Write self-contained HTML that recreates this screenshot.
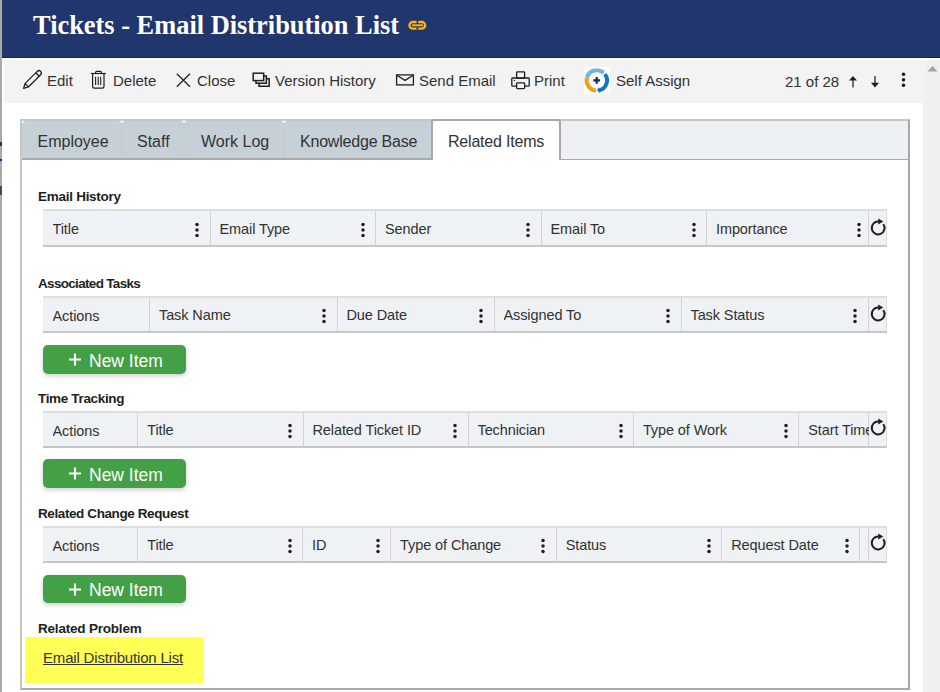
<!DOCTYPE html>
<html><head><meta charset="utf-8">
<style>
*{box-sizing:border-box;margin:0;padding:0}
html,body{width:940px;height:692px;overflow:hidden;background:#fff;font-family:"Liberation Sans",sans-serif;color:#323130}
.a{position:absolute}
#strip{left:0;top:0;width:2px;height:692px;background:#a9a9a9}
#hdr{left:2px;top:0;width:938px;height:58px;background:#21366c;border-bottom:1px solid #0b2463}
#title{left:33px;top:6.8px;font-family:"Liberation Serif",serif;font-weight:bold;font-size:26.4px;color:#fff;white-space:nowrap;line-height:36px}
#tb{left:4px;top:60px;width:922px;height:42.5px;background:#f3f3f3}
#sb{left:923px;top:102px;width:17px;height:590px;background:#f0f0f0}
#sb2{left:926px;top:60px;width:14px;height:42px;background:#f0f0f0}
.tt{font-size:15px;color:#323130;white-space:nowrap;line-height:18px}
#box{left:20px;top:119px;width:890px;height:571px;border:2px solid #c6c6c6;border-right-color:#a8a8a8;border-bottom-color:#a8a8a8}
#tabs{left:22px;top:121px;width:886px;height:39px;background:#eef1f4;border-bottom:1px solid #a9a9a9}
.tab{top:121px;height:38px;background:#c5d0d7;border-top:1px solid #c9cdd0;border-bottom:1px solid #a9a9a9}
.tsep{top:121px;height:37px;width:2px;background:#cacaca}
.tabt{font-size:16px;color:#333;white-space:nowrap;line-height:20px}
#act{left:431px;top:119px;width:130px;height:41px;background:#fff;border:2px solid #a8a8a8;border-bottom:none;border-radius:3px 3px 0 0}
.h{font-weight:bold;font-size:13.5px;letter-spacing:-0.2px;color:#201f1e;white-space:nowrap;line-height:16px;left:38px}
.grid{left:43px;width:844px;height:38px;background:#eef2f5;border-top:2px solid #dedede;border-right:1px solid #dcdcdc;border-bottom:2px solid #c6c6c6}
.sep{width:1px;background:#d2d2d2}
.gt{font-size:14.5px;letter-spacing:-0.1px;color:#323130;white-space:nowrap;line-height:18px}
.btn{left:43px;width:143px;height:28.5px;background:#43a047;border-radius:5px;box-shadow:0 2px 5px rgba(0,0,0,.2)}
.bt{color:#fff;font-size:17.5px;white-space:nowrap;line-height:20px}
</style></head><body>
<div id="strip" class="a"></div>
<div class="a" style="left:0;top:142px;width:2px;height:4px;background:#2a3a4a"></div>
<div class="a" style="left:0;top:159px;width:2px;height:2px;background:#1a2aa0"></div>
<div class="a" style="left:0;top:186px;width:2px;height:9px;background:#4a4a40"></div>
<div id="hdr" class="a"></div>
<div id="title" class="a">Tickets - Email Distribution List</div>
<svg class="a" style="left:406px;top:18px" width="24" height="14" viewBox="0 0 24 14">
<path d="M10.6 4 H6.7 A3.3 3.3 0 0 0 6.7 10.6 H10.6" fill="none" stroke="#f5b21a" stroke-width="2.3"/>
<path d="M12.2 4 H15.9 A3.3 3.3 0 0 1 15.9 10.6 H12.2" fill="none" stroke="#f5b21a" stroke-width="2.3"/>
<path d="M6 7.3 H17" stroke="#f5b21a" stroke-width="2"/>
</svg>
<div id="tb" class="a"></div>
<div id="sb" class="a"></div><div id="sb2" class="a"></div>
<svg class="a" style="left:927px;top:65px" width="11" height="7"><path d="M0.5 6.5 L5.5 1 L10.5 6.5Z" fill="#a3a3a3"/></svg>
<div id="box" class="a"></div>
<div id="tabs" class="a"></div>
<div class="a tab" style="left:22px;width:100px"></div>
<svg class="a" style="left:21px;top:120px" width="5" height="5"><path d="M0.8 0.8 H4.2 L0.8 4.2Z" fill="#eef2f4"/></svg>
<div class="a tabt" style="left:37.5px;top:132px;letter-spacing:0">Employee</div>
<div class="a tab" style="left:122px;width:62px"></div>
<div class="a tsep" style="left:121px"></div>
<svg class="a" style="left:119px;top:120px" width="6" height="4"><path d="M0.5 0.8 H5.5 L3 3.6Z" fill="#f4f6f7"/></svg>
<div class="a tabt" style="left:137px;top:132px;letter-spacing:0">Staff</div>
<div class="a tab" style="left:184px;width:100px"></div>
<div class="a tsep" style="left:183px"></div>
<svg class="a" style="left:181px;top:120px" width="6" height="4"><path d="M0.5 0.8 H5.5 L3 3.6Z" fill="#f4f6f7"/></svg>
<div class="a tabt" style="left:201px;top:132px;letter-spacing:0">Work Log</div>
<div class="a tab" style="left:284px;width:148px"></div>
<div class="a tsep" style="left:283px"></div>
<svg class="a" style="left:281px;top:120px" width="6" height="4"><path d="M0.5 0.8 H5.5 L3 3.6Z" fill="#f4f6f7"/></svg>
<div class="a tabt" style="left:300px;top:132px;letter-spacing:-0.2px">Knowledge Base</div>
<div id="act" class="a"></div>
<div class="a tabt" style="left:448px;top:132px;letter-spacing:-0.2px">Related Items</div>
<div class="a h" style="top:189.2px;letter-spacing:-0.27px">Email History</div>
<div class="a grid" style="top:209px;height:38px"></div>
<div class="a sep" style="left:209.5px;top:211px;height:34px"></div>
<div class="a sep" style="left:375.0px;top:211px;height:34px"></div>
<div class="a sep" style="left:540.5px;top:211px;height:34px"></div>
<div class="a sep" style="left:706.0px;top:211px;height:34px"></div>
<div class="a sep" style="left:867.5px;top:211px;height:34px"></div>
<div class="a gt" style="left:52.5px;top:220.0px;width:157.5px;overflow:hidden">Title</div>
<svg class="a" style="left:193.2px;top:219.9px" width="8" height="20" viewBox="0 0 8 20"><g fill="#201f1e"><circle cx="4" cy="4.4" r="1.75"/><circle cx="4" cy="10" r="1.75"/><circle cx="4" cy="15.6" r="1.75"/></g></svg>
<div class="a gt" style="left:219.5px;top:220.0px;width:156.0px;overflow:hidden">Email Type</div>
<svg class="a" style="left:358.7px;top:219.9px" width="8" height="20" viewBox="0 0 8 20"><g fill="#201f1e"><circle cx="4" cy="4.4" r="1.75"/><circle cx="4" cy="10" r="1.75"/><circle cx="4" cy="15.6" r="1.75"/></g></svg>
<div class="a gt" style="left:385.0px;top:220.0px;width:156.0px;overflow:hidden">Sender</div>
<svg class="a" style="left:524.2px;top:219.9px" width="8" height="20" viewBox="0 0 8 20"><g fill="#201f1e"><circle cx="4" cy="4.4" r="1.75"/><circle cx="4" cy="10" r="1.75"/><circle cx="4" cy="15.6" r="1.75"/></g></svg>
<div class="a gt" style="left:550.5px;top:220.0px;width:156.0px;overflow:hidden">Email To</div>
<svg class="a" style="left:689.7px;top:219.9px" width="8" height="20" viewBox="0 0 8 20"><g fill="#201f1e"><circle cx="4" cy="4.4" r="1.75"/><circle cx="4" cy="10" r="1.75"/><circle cx="4" cy="15.6" r="1.75"/></g></svg>
<div class="a gt" style="left:716.0px;top:220.0px;width:152.0px;overflow:hidden">Importance</div>
<svg class="a" style="left:854.8px;top:219.9px" width="8" height="20" viewBox="0 0 8 20"><g fill="#201f1e"><circle cx="4" cy="4.4" r="1.75"/><circle cx="4" cy="10" r="1.75"/><circle cx="4" cy="15.6" r="1.75"/></g></svg>
<svg class="a" style="left:867.7px;top:217.8px" width="20" height="20" viewBox="0 0 20 20"><path d="M10.6 3.6 A6.4 6.4 0 1 0 15.3 6.2" fill="none" stroke="#201f1e" stroke-width="2"/><path d="M10.2 0.6 L15.3 3.5 L10.2 6.4Z" fill="#201f1e"/></svg>
<div class="a h" style="top:275.9px;letter-spacing:-0.68px">Associated Tasks</div>
<div class="a grid" style="top:296px;height:37px"></div>
<div class="a sep" style="left:149.0px;top:298px;height:33px"></div>
<div class="a sep" style="left:336.5px;top:298px;height:33px"></div>
<div class="a sep" style="left:493.5px;top:298px;height:33px"></div>
<div class="a sep" style="left:680.5px;top:298px;height:33px"></div>
<div class="a sep" style="left:867.5px;top:298px;height:33px"></div>
<div class="a gt" style="left:52.5px;top:307.2px;width:97.0px;overflow:hidden">Actions</div>
<div class="a gt" style="left:159.0px;top:305.9px;width:178.0px;overflow:hidden">Task Name</div>
<svg class="a" style="left:320.2px;top:305.7px" width="8" height="20" viewBox="0 0 8 20"><g fill="#201f1e"><circle cx="4" cy="4.4" r="1.75"/><circle cx="4" cy="10" r="1.75"/><circle cx="4" cy="15.6" r="1.75"/></g></svg>
<div class="a gt" style="left:346.5px;top:305.9px;width:147.5px;overflow:hidden">Due Date</div>
<svg class="a" style="left:477.2px;top:305.7px" width="8" height="20" viewBox="0 0 8 20"><g fill="#201f1e"><circle cx="4" cy="4.4" r="1.75"/><circle cx="4" cy="10" r="1.75"/><circle cx="4" cy="15.6" r="1.75"/></g></svg>
<div class="a gt" style="left:503.5px;top:305.9px;width:177.5px;overflow:hidden">Assigned To</div>
<svg class="a" style="left:664.2px;top:305.7px" width="8" height="20" viewBox="0 0 8 20"><g fill="#201f1e"><circle cx="4" cy="4.4" r="1.75"/><circle cx="4" cy="10" r="1.75"/><circle cx="4" cy="15.6" r="1.75"/></g></svg>
<div class="a gt" style="left:690.5px;top:305.9px;width:177.5px;overflow:hidden">Task Status</div>
<svg class="a" style="left:851.2px;top:305.7px" width="8" height="20" viewBox="0 0 8 20"><g fill="#201f1e"><circle cx="4" cy="4.4" r="1.75"/><circle cx="4" cy="10" r="1.75"/><circle cx="4" cy="15.6" r="1.75"/></g></svg>
<svg class="a" style="left:867.7px;top:303.5px" width="20" height="20" viewBox="0 0 20 20"><path d="M10.6 3.6 A6.4 6.4 0 1 0 15.3 6.2" fill="none" stroke="#201f1e" stroke-width="2"/><path d="M10.2 0.6 L15.3 3.5 L10.2 6.4Z" fill="#201f1e"/></svg>
<div class="a btn" style="top:345px"></div>
<svg class="a" style="left:68px;top:353px" width="14" height="13" viewBox="0 0 14 13"><path d="M1 6.5 H13 M7 0.6 V12.4" stroke="#fff" stroke-width="2.1"/></svg>
<div class="a bt" style="left:89px;top:350.6px">New Item</div>
<div class="a h" style="top:390.5px;letter-spacing:-0.34px">Time Tracking</div>
<div class="a grid" style="top:411px;height:37px"></div>
<div class="a sep" style="left:137.2px;top:413px;height:33px"></div>
<div class="a sep" style="left:302.5px;top:413px;height:33px"></div>
<div class="a sep" style="left:467.5px;top:413px;height:33px"></div>
<div class="a sep" style="left:632.9px;top:413px;height:33px"></div>
<div class="a sep" style="left:798.2px;top:413px;height:33px"></div>
<div class="a sep" style="left:868.2px;top:413px;height:33px"></div>
<div class="a gt" style="left:52.5px;top:422.2px;width:85.2px;overflow:hidden">Actions</div>
<div class="a gt" style="left:147.2px;top:420.9px;width:155.8px;overflow:hidden">Title</div>
<svg class="a" style="left:286.2px;top:420.7px" width="8" height="20" viewBox="0 0 8 20"><g fill="#201f1e"><circle cx="4" cy="4.4" r="1.75"/><circle cx="4" cy="10" r="1.75"/><circle cx="4" cy="15.6" r="1.75"/></g></svg>
<div class="a gt" style="left:312.5px;top:420.9px;width:155.5px;overflow:hidden">Related Ticket ID</div>
<svg class="a" style="left:451.2px;top:420.7px" width="8" height="20" viewBox="0 0 8 20"><g fill="#201f1e"><circle cx="4" cy="4.4" r="1.75"/><circle cx="4" cy="10" r="1.75"/><circle cx="4" cy="15.6" r="1.75"/></g></svg>
<div class="a gt" style="left:477.5px;top:420.9px;width:155.9px;overflow:hidden">Technician</div>
<svg class="a" style="left:616.6px;top:420.7px" width="8" height="20" viewBox="0 0 8 20"><g fill="#201f1e"><circle cx="4" cy="4.4" r="1.75"/><circle cx="4" cy="10" r="1.75"/><circle cx="4" cy="15.6" r="1.75"/></g></svg>
<div class="a gt" style="left:642.9px;top:420.9px;width:155.8px;overflow:hidden">Type of Work</div>
<svg class="a" style="left:781.9px;top:420.7px" width="8" height="20" viewBox="0 0 8 20"><g fill="#201f1e"><circle cx="4" cy="4.4" r="1.75"/><circle cx="4" cy="10" r="1.75"/><circle cx="4" cy="15.6" r="1.75"/></g></svg>
<div class="a gt" style="left:808.2px;top:420.9px;width:60.5px;overflow:hidden">Start Time</div>
<svg class="a" style="left:867.7px;top:417.7px" width="20" height="20" viewBox="0 0 20 20"><path d="M10.6 3.6 A6.4 6.4 0 1 0 15.3 6.2" fill="none" stroke="#201f1e" stroke-width="2"/><path d="M10.2 0.6 L15.3 3.5 L10.2 6.4Z" fill="#201f1e"/></svg>
<div class="a btn" style="top:459px"></div>
<svg class="a" style="left:68px;top:467px" width="14" height="13" viewBox="0 0 14 13"><path d="M1 6.5 H13 M7 0.6 V12.4" stroke="#fff" stroke-width="2.1"/></svg>
<div class="a bt" style="left:89px;top:464.6px">New Item</div>
<div class="a h" style="top:505.5px;letter-spacing:-0.4px">Related Change Request</div>
<div class="a grid" style="top:525.5px;height:37px"></div>
<div class="a sep" style="left:137.2px;top:527.5px;height:33px"></div>
<div class="a sep" style="left:302.0px;top:527.5px;height:33px"></div>
<div class="a sep" style="left:390.1px;top:527.5px;height:33px"></div>
<div class="a sep" style="left:555.7px;top:527.5px;height:33px"></div>
<div class="a sep" style="left:721.2px;top:527.5px;height:33px"></div>
<div class="a sep" style="left:859.1px;top:527.5px;height:33px"></div>
<div class="a sep" style="left:867.6px;top:527.5px;height:33px"></div>
<div class="a gt" style="left:52.5px;top:536.8px;width:85.2px;overflow:hidden">Actions</div>
<div class="a gt" style="left:147.2px;top:535.5px;width:155.3px;overflow:hidden">Title</div>
<svg class="a" style="left:285.7px;top:535.7px" width="8" height="20" viewBox="0 0 8 20"><g fill="#201f1e"><circle cx="4" cy="4.4" r="1.75"/><circle cx="4" cy="10" r="1.75"/><circle cx="4" cy="15.6" r="1.75"/></g></svg>
<div class="a gt" style="left:312.0px;top:535.5px;width:78.6px;overflow:hidden">ID</div>
<svg class="a" style="left:373.8px;top:535.7px" width="8" height="20" viewBox="0 0 8 20"><g fill="#201f1e"><circle cx="4" cy="4.4" r="1.75"/><circle cx="4" cy="10" r="1.75"/><circle cx="4" cy="15.6" r="1.75"/></g></svg>
<div class="a gt" style="left:400.1px;top:535.5px;width:156.1px;overflow:hidden">Type of Change</div>
<svg class="a" style="left:539.4px;top:535.7px" width="8" height="20" viewBox="0 0 8 20"><g fill="#201f1e"><circle cx="4" cy="4.4" r="1.75"/><circle cx="4" cy="10" r="1.75"/><circle cx="4" cy="15.6" r="1.75"/></g></svg>
<div class="a gt" style="left:565.7px;top:535.5px;width:156.0px;overflow:hidden">Status</div>
<svg class="a" style="left:704.9px;top:535.7px" width="8" height="20" viewBox="0 0 8 20"><g fill="#201f1e"><circle cx="4" cy="4.4" r="1.75"/><circle cx="4" cy="10" r="1.75"/><circle cx="4" cy="15.6" r="1.75"/></g></svg>
<div class="a gt" style="left:731.2px;top:535.5px;width:128.4px;overflow:hidden">Request Date</div>
<svg class="a" style="left:842.8px;top:535.7px" width="8" height="20" viewBox="0 0 8 20"><g fill="#201f1e"><circle cx="4" cy="4.4" r="1.75"/><circle cx="4" cy="10" r="1.75"/><circle cx="4" cy="15.6" r="1.75"/></g></svg>
<svg class="a" style="left:867.7px;top:532.7px" width="20" height="20" viewBox="0 0 20 20"><path d="M10.6 3.6 A6.4 6.4 0 1 0 15.3 6.2" fill="none" stroke="#201f1e" stroke-width="2"/><path d="M10.2 0.6 L15.3 3.5 L10.2 6.4Z" fill="#201f1e"/></svg>
<div class="a btn" style="top:574.5px"></div>
<svg class="a" style="left:68px;top:582.5px" width="14" height="13" viewBox="0 0 14 13"><path d="M1 6.5 H13 M7 0.6 V12.4" stroke="#fff" stroke-width="2.1"/></svg>
<div class="a bt" style="left:89px;top:580.1px">New Item</div>
<div class="a h" style="top:620.5px;letter-spacing:-0.2px">Related Problem</div>
<div class="a" style="left:25px;top:637px;width:179px;height:46px;background:#ffff55"></div>
<div class="a tt" style="left:43px;top:649px;text-decoration:underline;color:#333;letter-spacing:-0.18px">Email Distribution List</div>
<!-- toolbar -->
<svg class="a" style="left:20px;top:68px" width="24" height="24" viewBox="0 0 24 24">
<g fill="none" stroke="#201f1e" stroke-width="1.3" stroke-linejoin="round">
<path d="M3.6 20.4 L5 15.6 L17.2 3.4 A2.1 2.1 0 0 1 20.6 6.8 L8.4 19 Z"/>
<path d="M5 15.6 L8.4 19"/>
<path d="M15.8 4.8 L19.2 8.2"/>
</g></svg>
<div class="a tt" style="left:47px;top:72px">Edit</div>
<svg class="a" style="left:88px;top:68px" width="22" height="24" viewBox="0 0 22 24">
<g fill="none" stroke="#201f1e" stroke-width="1.2">
<path d="M3 5.5 H17.8"/>
<path d="M7.6 5.5 V4.6 A1.2 1.2 0 0 1 8.8 3.4 H12.2 A1.2 1.2 0 0 1 13.4 4.6 V5.5"/>
<path d="M4.6 5.5 V18.6 A1.6 1.6 0 0 0 6.2 20.2 H14.4 A1.6 1.6 0 0 0 16 18.6 V5.5"/>
<path d="M7.6 8.8 V17 M10.2 8.8 V17 M12.7 8.8 V17" stroke-width="1.1"/>
</g></svg>
<div class="a tt" style="left:113px;top:72px">Delete</div>
<svg class="a" style="left:175px;top:72px" width="17" height="17" viewBox="0 0 17 17">
<path d="M1.8 1.8 L15 14.8 M15 1.8 L1.8 14.8" stroke="#201f1e" stroke-width="1.2" fill="none"/></svg>
<div class="a tt" style="left:197px;top:72px">Close</div>
<svg class="a" style="left:250px;top:70px" width="24" height="20" viewBox="0 0 24 20">
<g fill="none" stroke="#201f1e" stroke-width="1.5">
<rect x="3.2" y="3.2" width="10.5" height="7.4"/>
<path d="M13.7 6 H16.4 V13.3 H6 V10.6"/>
<path d="M16.4 8.8 H19.2 V16.2 H9 V13.3"/>
</g></svg>
<div class="a tt" style="left:275px;top:72px">Version History</div>
<svg class="a" style="left:393px;top:70px" width="24" height="20" viewBox="0 0 24 20">
<g fill="none" stroke="#201f1e" stroke-width="1.3">
<rect x="3.6" y="4.9" width="16.8" height="10"/>
<path d="M3.8 5.2 L12 10.4 L20.2 5.2"/>
</g></svg>
<div class="a tt" style="left:419px;top:72px">Send Email</div>
<svg class="a" style="left:508px;top:68px" width="24" height="24" viewBox="0 0 24 24">
<g fill="none" stroke="#201f1e" stroke-width="1.3">
<rect x="8.6" y="3.8" width="8" height="6.4" rx="0.8"/>
<path d="M8.6 18.2 H4.6 A0.8 0.8 0 0 1 3.8 17.4 V10.8 A0.8 0.8 0 0 1 4.6 10 H20.4 A0.8 0.8 0 0 1 21.2 10.8 V17.4 A0.8 0.8 0 0 1 20.4 18.2 H16.6"/>
<rect x="8.6" y="14.8" width="8" height="5.8" rx="0.8"/>
</g><circle cx="6.3" cy="12.4" r="0.7" fill="#201f1e"/></svg>
<div class="a tt" style="left:534px;top:72px">Print</div>
<div class="a" style="left:584px;top:67px;width:26px;height:27px;background:#fff"></div>
<svg class="a" style="left:584px;top:67px" width="26" height="27" viewBox="0 0 26 27"><path d="M3.00 10.59 A10.2 10.2 0 0 1 18.80 5.15" stroke="#72b4e0" stroke-width="4.0" fill="none"/><path d="M20.84 7.12 A10.2 10.2 0 0 1 14.92 23.38" stroke="#0b77c6" stroke-width="4.0" fill="none"/><path d="M12.09 23.58 A10.2 10.2 0 0 1 2.75 11.63" stroke="#e6a31e" stroke-width="4.0" fill="none"/><path d="M20.41 2.13 L20.14 6.31 L16.60 7.76Z" fill="#72b4e0"/><path d="M16.09 26.60 L13.16 23.59 L14.45 20.00Z" fill="#0b77c6"/><path d="M-0.67 11.51 L3.22 9.91 L6.07 12.45Z" fill="#e6a31e"/><path d="M9.3 13.4 H16.1 M12.7 10 V16.8" stroke="#17295e" stroke-width="2.2"/></svg>
<div class="a tt" style="left:616px;top:72px">Self Assign</div>
<div class="a tt" style="left:785px;top:73px">21 of 28</div>
<svg class="a" style="left:846px;top:74px" width="14" height="16" viewBox="0 0 14 16">
<path d="M7 5 V13.4" stroke="#201f1e" stroke-width="1.25"/><path d="M3 6.6 L7 2 L11 6.6Z" fill="#201f1e"/></svg>
<svg class="a" style="left:868px;top:74px" width="14" height="16" viewBox="0 0 14 16">
<path d="M7 2 V10.4" stroke="#201f1e" stroke-width="1.25"/><path d="M3 8.8 L7 13.4 L11 8.8Z" fill="#201f1e"/></svg>
<svg class="a" style="left:899px;top:70px" width="9" height="20" viewBox="0 0 9 20">
<g fill="#111"><circle cx="4.5" cy="4.3" r="1.7"/><circle cx="4.5" cy="9.8" r="1.7"/><circle cx="4.5" cy="15.3" r="1.7"/></g></svg>
</body></html>
